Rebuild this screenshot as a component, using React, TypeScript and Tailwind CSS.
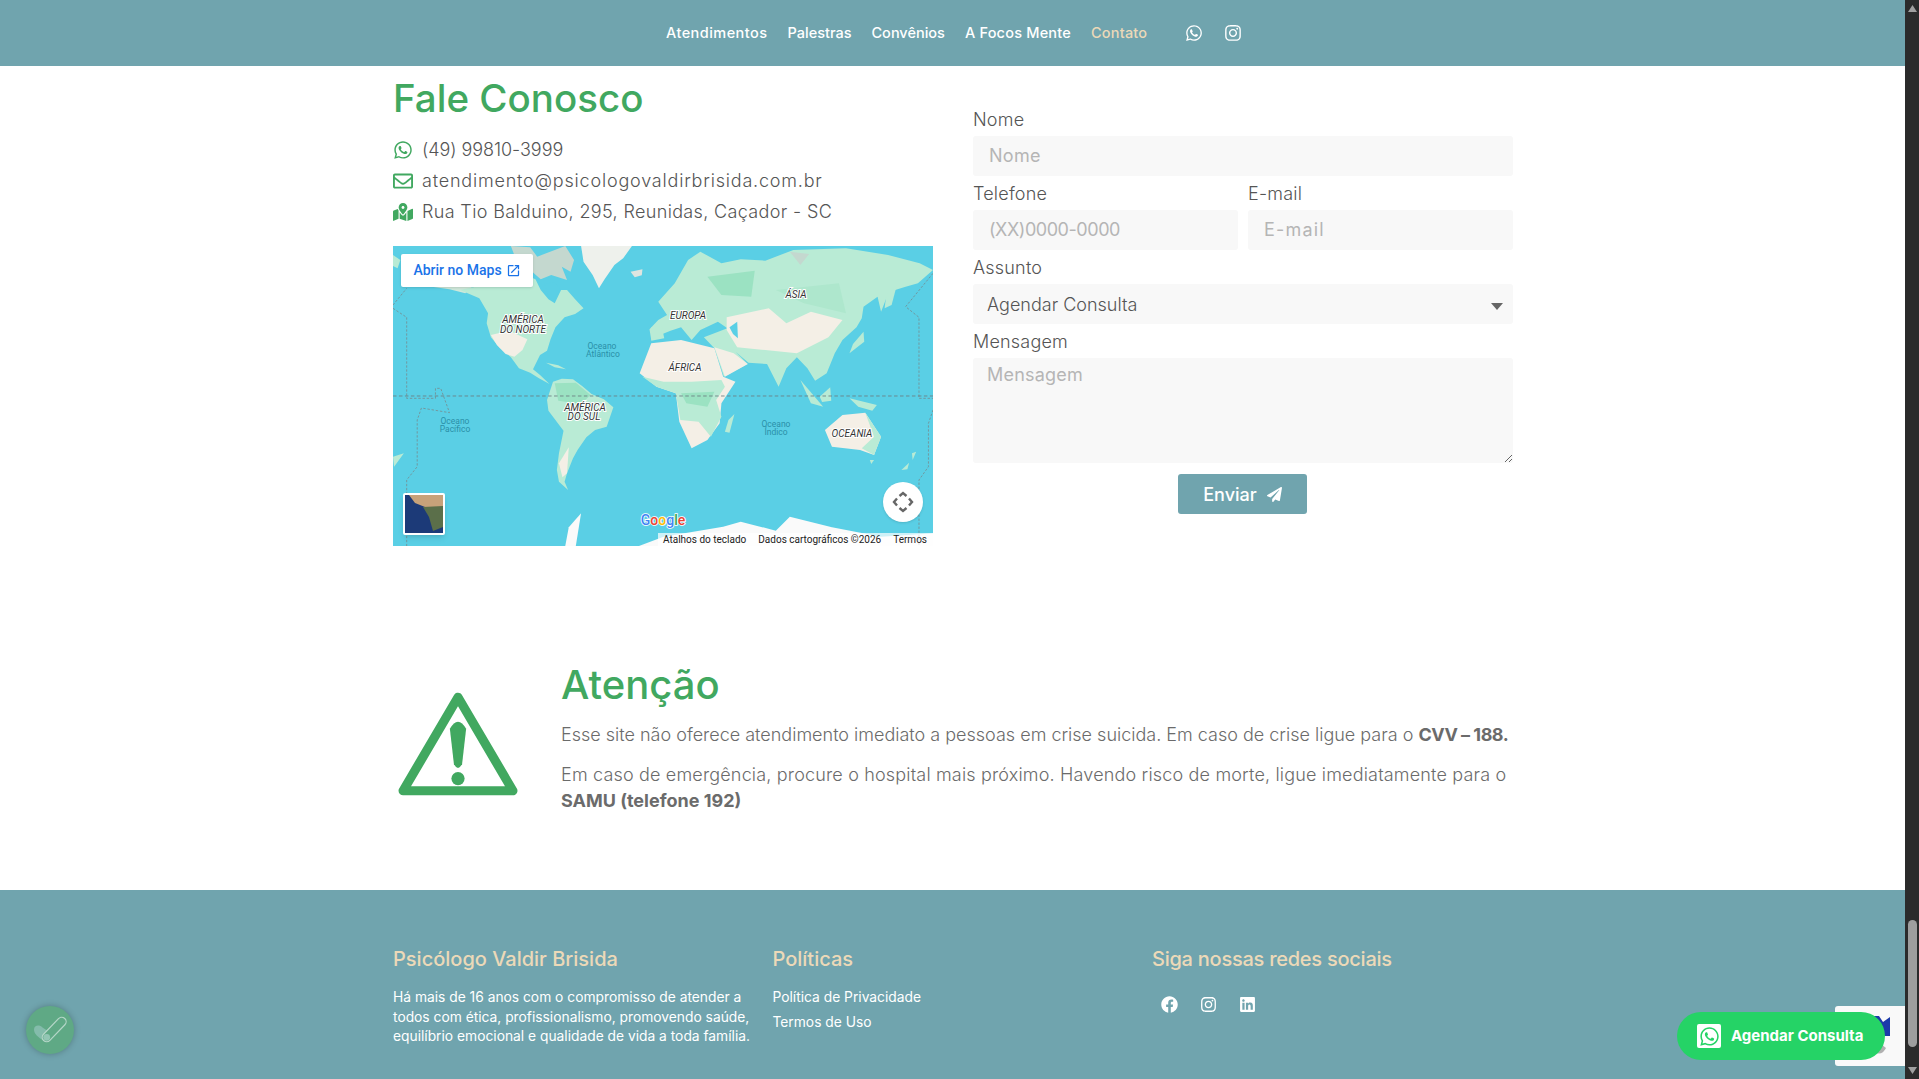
import React from "react";
import { FaWhatsapp, FaInstagram, FaRegEnvelope, FaMapMarkedAlt, FaPaperPlane, FaFacebook, FaLinkedin } from "react-icons/fa";
import { MdOpenInNew } from "react-icons/md";

const LAND = "#b9ebd5";
const FOREST = "#9be2c2";
const SAND = "#f4efe6";
const SEA = "#5acfe5";

function WorldMap() {
  const label = { fontFamily: "Roboto, sans-serif", fontSize: 10, fontStyle: "italic", fill: "#333", stroke: "#fff", strokeWidth: 2, paintOrder: "stroke" as const };
  const ocean = { fontFamily: "Roboto, sans-serif", fontSize: 8.5, fill: "#2a8fa8", textAnchor: "middle" as const };
  return (
    <svg viewBox="0 0 540 300" className="w-full h-full block">
      <rect width="540" height="300" fill={SEA} />
      <g transform="scale(0.35088,0.33333) translate(-9,-18)">
        {/* arctic islands & greenland */}
        <path d="M345,18 L400,22 L420,50 L470,30 L500,18 L525,60 L515,95 L490,80 L505,120 L460,105 L430,118 L400,90 L360,60Z" fill="#c4d8cf" />
        <path d="M120,140 L190,118 L235,140 L215,160 L170,148Z" fill="#cfe8da" />
        <path d="M545,18 L690,18 L665,55 L640,75 L612,118 L596,145 L578,105 L552,65Z" fill="#eef1ec" />
        <path d="M686,95 L720,88 L718,106 L698,112Z" fill="#dfe5e0" />
        <path d="M9,45 L30,60 L22,85 L9,78Z" fill={LAND} />
        {/* north america */}
        <path d="M200,150 L235,142 L300,135 L345,118 L375,100 L415,118 L430,150 L452,178 L470,190 L488,150 L505,150 L528,178 L552,205 L528,222 L498,232 L472,262 L458,298 L448,332 L428,345 L408,388 L428,405 L455,432 L425,415 L400,398 L368,385 L345,352 L312,322 L288,292 L276,250 L280,220 L255,175Z" fill={LAND} />
        <path d="M288,285 L340,272 L392,298 L378,330 L355,350 L330,342 L305,315Z" fill={SAND} />
        <path d="M440,130 L470,128 L486,146 L468,182 L452,168Z" fill={SEA} />
        <path d="M445,368 L480,376 L502,388 L470,382Z" fill={LAND} />
        {/* south america */}
        <path d="M465,425 L490,416 L522,418 L548,438 L575,462 L610,478 L637,502 L618,560 L585,570 L560,592 L535,630 L522,655 L505,700 L498,725 L508,750 L482,725 L476,690 L482,640 L495,572 L452,512 L448,480Z" fill={LAND} />
        <path d="M470,430 L530,428 L572,465 L545,492 L480,482Z" fill={FOREST} />
        <path d="M482,670 L510,622 L505,700 L492,712Z" fill={SAND} />
        {/* eurasia */}
        <path d="M745,300 L740,268 L765,240 L790,225 L765,185 L812,130 L850,60 L885,35 L945,70 L1000,58 L1070,62 L1150,30 L1300,25 L1420,45 L1510,70 L1548,90 L1505,130 L1470,140 L1440,150 L1415,175 L1400,215 L1390,170 L1350,200 L1345,235 L1330,262 L1290,300 L1268,340 L1245,400 L1212,422 L1190,385 L1160,352 L1130,385 L1108,440 L1075,372 L1022,368 L985,335 L1020,372 L952,410 L925,325 L895,292 L962,265 L935,245 L885,270 L860,300 L830,262 L800,272 L770,285Z" fill={LAND} />
        <path d="M905,110 L1040,92 L1030,170 L945,165Z" fill={FOREST} />
        <path d="M1100,150 L1280,130 L1300,220 L1180,190Z" fill="#aee7cd" />
        <path d="M960,232 L1080,205 L1130,250 L1200,215 L1290,240 L1250,292 L1160,340 L1070,330 L990,322 L960,270Z" fill={SAND} />
        <path d="M925,322 L980,340 L1020,372 L955,410Z" fill={SAND} />
        <path d="M968,262 L990,245 L992,295 L978,282Z" fill={SEA} />
        <path d="M1140,35 L1195,42 L1170,75Z" fill="#c4d8cf" />
        <path d="M1415,165 L1445,135 L1430,195 L1410,205Z" fill={LAND} />
        <path d="M745,262 L775,258 L782,295 L745,302Z" fill={LAND} />
        {/* japan, indonesia etc. */}
        <path d="M1350,275 L1352,305 L1310,340 L1320,312Z" fill={LAND} />
        <path d="M1170,420 L1235,500 L1200,490Z" fill={LAND} />
        <path d="M1225,470 L1255,442 L1258,482 L1232,486Z" fill={LAND} />
        <path d="M1310,475 L1388,495 L1375,512 L1335,500Z" fill={LAND} />
        {/* africa */}
        <path d="M745,310 L830,300 L925,325 L950,410 L985,425 L945,490 L940,550 L905,600 L860,625 L825,545 L815,460 L760,440 L712,400Z" fill={SAND} />
        <path d="M720,410 L780,425 L860,425 L945,420 L955,440 L930,480 L945,530 L915,590 L880,545 L828,540 L815,460 L760,440Z" fill={LAND} />
        <path d="M830,460 L925,455 L905,500 L845,490Z" fill={FOREST} />
        <path d="M965,540 L982,522 L968,578 L955,575Z" fill={LAND} />
        {/* australia */}
        <path d="M1240,570 L1290,525 L1355,518 L1400,590 L1380,645 L1340,630 L1260,620Z" fill={SAND} />
        <path d="M1355,518 L1400,590 L1380,645 L1345,625 L1380,590Z" fill={LAND} />
        <path d="M1368,660 L1380,660 L1372,672Z M1458,690 L1480,668 L1475,688Z M1488,640 L1500,635 L1490,660Z M9,650 L40,640 L12,680Z" fill={LAND} />
        {/* antarctica */}
        <path d="M710,918 L780,890 L950,860 L1000,845 L1100,872 L1140,830 L1260,862 L1400,890 L1548,880 L1548,918Z" fill="#fafafa" />
        <path d="M500,918 L510,862 L545,820 L530,918Z" fill="#fafafa" />
        {/* date lines */}
        <path d="M9,468 L1548,468" fill="none" stroke="#6c7b80" strokeWidth="2.5" strokeDasharray="10 7" />
        <g fill="none" stroke="#7b7f80" strokeWidth="2" strokeDasharray="7 5">
          <path d="M48,232 L48,475 L130,475 L130,445 L145,445 L170,518 L90,504 L78,540 L78,680 L48,720 L48,918" />
          <path d="M9,205 L48,232 M9,195 L48,145" />
          <path d="M1548,100 L1470,200 L1508,232 L1508,475 L1548,475" />
          <path d="M1548,510 L1535,550 L1535,680 L1508,720 L1508,918" />
        </g>
      </g>
      <g style={label}>
        <text x="130" y="77" textAnchor="middle">AMÉRICA</text>
        <text x="130" y="87" textAnchor="middle">DO NORTE</text>
        <text x="192" y="165" textAnchor="middle">AMÉRICA</text>
        <text x="191" y="174" textAnchor="middle">DO SUL</text>
        <text x="295" y="73" textAnchor="middle">EUROPA</text>
        <text x="292" y="125" textAnchor="middle">ÁFRICA</text>
        <text x="403" y="52" textAnchor="middle">ÁSIA</text>
        <text x="459" y="191" textAnchor="middle">OCEANIA</text>
      </g>
      <g style={ocean}>
        <text x="209" y="103">Oceano</text>
        <text x="210" y="111">Atlântico</text>
        <text x="62" y="178">Oceano</text>
        <text x="62" y="186">Pacífico</text>
        <text x="383" y="181">Oceano</text>
        <text x="383" y="189">Índico</text>
      </g>
      <text x="270" y="279" textAnchor="middle" style={{ fontFamily: "Roboto, sans-serif", fontSize: 14, fontWeight: 500, stroke: "#fff", strokeWidth: 1.6, paintOrder: "stroke" }}>
        <tspan fill="#4285f4">G</tspan><tspan fill="#ea4335">o</tspan><tspan fill="#fbbc05">o</tspan><tspan fill="#4285f4">g</tspan><tspan fill="#34a853">l</tspan><tspan fill="#ea4335">e</tspan>
      </text>
    </svg>
  );
}

const labelCls = "h-[20px] leading-[20px] text-[18px] font-light text-[#555] tracking-[0.2px]";

function Field({ label, placeholder, inputClass }: { label: string; placeholder: string; inputClass: string }) {
  return (
    <div className="flex-1 min-w-0">
      <div className={labelCls}>{label}</div>
      <input placeholder={placeholder} className={inputClass} />
    </div>
  );
}

function Contact({ icon, text, track }: { icon: React.ReactNode; text: string; track: string }) {
  return (
    <div className="flex items-center h-[31px]">
      <div className="w-[29px] flex justify-start text-[#41a860]">{icon}</div>
      <div className={track}>{text}</div>
    </div>
  );
}

export default function App() {
  return (
    <div className="relative flex h-[1079px] w-full overflow-hidden bg-white font-['Inter',sans-serif]">
      <div className="flex-1 min-w-0 flex flex-col">
        <header className="h-[66px] bg-[#70a4ae] flex items-center pl-[666px] text-[14.5px] font-medium text-white">
          <a className="tracking-[0.45px]">Atendimentos</a>
          <a className="ml-[20px]">Palestras</a>
          <a className="ml-[20px]">Convênios</a>
          <a className="ml-[20px] tracking-[0.2px]">A Focos Mente</a>
          <a className="ml-[20px] tracking-[0.2px] text-[#ecd9b8]">Contato</a>
          <FaWhatsapp className="ml-[38px] text-[18px]" />
          <FaInstagram className="ml-[21px] text-[18px]" />
        </header>

        <main className="flex-1 pl-[393px] pr-[392px]">
          <div className="grid grid-cols-2 gap-[40px] pt-[10px]">
            <section>
              <h1 className="h-[45px] leading-[45px] text-[38.5px] font-medium text-[#41a860]">Fale Conosco</h1>
              <div className="mt-[13px]">
                <Contact icon={<FaWhatsapp className="text-[20px]" />} text="(49) 99810-3999" track="text-[18px] text-[#555] font-light tracking-[-0.05px]" />
                <Contact icon={<FaRegEnvelope className="text-[20px]" />} text="atendimento@psicologovaldirbrisida.com.br" track="text-[18px] text-[#555] font-light tracking-[0.8px]" />
                <Contact icon={<FaMapMarkedAlt className="text-[20px]" />} text="Rua Tio Balduino, 295, Reunidas, Caçador - SC" track="text-[18px] text-[#555] font-light tracking-[0.35px]" />
              </div>
              <div className="relative mt-[19px] h-[300px] overflow-hidden">
                <WorldMap />
                <div className="absolute left-[8px] top-[8px] flex h-[33px] w-[132px] items-center justify-center gap-[4px] rounded-[2px] bg-white shadow-sm font-['Roboto',sans-serif] text-[14px] font-medium text-[#1a73e8]">
                  Abrir no Maps <MdOpenInNew className="text-[15px]" />
                </div>
                <div className="absolute left-[10px] top-[247px] h-[42px] w-[42px] rounded-[2px] border-2 border-white shadow-md bg-[#1c3a78] overflow-hidden">
                  <svg viewBox="0 0 38 38" className="w-full h-full block">
                    <rect width="38" height="38" fill="#1c3a78" />
                    <path d="M4,0 L38,0 L38,12 L20,12 L10,8Z" fill="#c7a27a" />
                    <path d="M18,12 L38,11 L38,32 L28,36 L24,22Z" fill="#5b6f4a" />
                  </svg>
                </div>
                <div className="absolute left-[490px] top-[236px] flex h-[40px] w-[40px] items-center justify-center rounded-full bg-white shadow">
                  <svg viewBox="0 0 24 24" className="w-[24px] h-[24px]" fill="none" stroke="#666" strokeWidth="2.4">
                    <path d="M8.5 6 L12 3 L15.5 6 M8.5 18 L12 21 L15.5 18 M6 8.5 L3 12 L6 15.5 M18 8.5 L21 12 L18 15.5" />
                  </svg>
                </div>
                <div className="absolute right-0 bottom-0 flex h-[13px] items-center bg-white/70 font-['Roboto',sans-serif] text-[10px] text-[#222]">
                  <span className="pl-[5px] pr-[6px]">Atalhos do teclado</span>
                  <span className="px-[6px]">Dados cartográficos ©2026</span>
                  <span className="pl-[6px] pr-[6px]">Termos</span>
                </div>
              </div>
            </section>

            <section className="pt-[34px]">
              <div className="flex flex-col gap-[8px]">
                <Field label="Nome" placeholder="Nome" inputClass="mt-[6px] block w-full h-[40px] rounded-[3px] bg-[#f8f8f8] pl-[16px] pb-[2px] text-[18px] text-[#666] tracking-[0.3px] outline-none placeholder:text-[#b5b5b5]" />
                <div className="flex gap-[10px]">
                  <Field label="Telefone" placeholder="(XX)0000-0000" inputClass="mt-[6px] block w-full h-[40px] rounded-[3px] bg-[#f8f8f8] pl-[16px] pb-[2px] text-[18px] text-[#666] tracking-[-0.45px] outline-none placeholder:text-[#b5b5b5]" />
                  <Field label="E-mail" placeholder="E-mail" inputClass="mt-[6px] block w-full h-[40px] rounded-[3px] bg-[#f8f8f8] pl-[16px] pb-[2px] text-[18px] text-[#666] tracking-[1.2px] outline-none placeholder:text-[#b5b5b5]" />
                </div>
                <div>
                  <div className={labelCls}>Assunto</div>
                  <div className="relative mt-[6px] flex h-[40px] items-center rounded-[3px] bg-[#f8f8f8] pl-[14px] text-[18px] font-light text-[#555]">
                    Agendar Consulta
                    <svg viewBox="0 0 12 7" className="absolute right-[10px] top-[19px] w-[12px] h-[7px]"><path d="M0,0 L12,0 L6,7Z" fill="#666" /></svg>
                  </div>
                </div>
                <div>
                  <div className={labelCls}>Mensagem</div>
                  <textarea placeholder="Mensagem" className="mt-[6px] block h-[105px] w-full rounded-[3px] bg-[#f8f8f8] pl-[14px] pt-[3px] text-[18px] text-[#666] tracking-[0.2px] outline-none placeholder:text-[#b5b5b5]" />
                </div>
              </div>
              <div className="mt-[11px] flex justify-center pr-[1px]">
                <button className="flex h-[40px] w-[129px] items-center justify-center gap-[10px] rounded-[3px] bg-[#70a4ae] text-[18px] font-medium text-white">
                  Enviar <FaPaperPlane className="text-[15px]" />
                </button>
              </div>
            </section>
          </div>

          <section className="mt-[116px] flex">
            <div className="w-[168px] pl-[4px] pt-[28px] shrink-0">
              <svg viewBox="0 0 120 106" className="w-[122px] h-[108px]">
                <path d="M60,7 L114,99 L6,99Z" fill="none" stroke="#41a860" strokeWidth="9" strokeLinejoin="round" />
                <path d="M52,38 Q60,24 68,38 L64,73 Q60,80 56,73Z" fill="#41a860" />
                <circle cx="60" cy="87" r="6.5" fill="#41a860" />
              </svg>
            </div>
            <div className="flex-1 min-w-0">
              <h2 className="h-[45px] leading-[45px] text-[40px] font-medium text-[#41a860]">Atenção</h2>
              <p className="mt-[15px] text-[18px] leading-[26px] text-[#6b6b6b] font-light">Esse site não oferece atendimento imediato a pessoas em crise suicida. Em caso de crise ligue para o <b className="font-bold tracking-[-0.5px] whitespace-nowrap">CVV – 188.</b></p>
              <p className="mt-[14px] text-[18px] leading-[26px] text-[#6b6b6b] font-light tracking-[0.17px]">Em caso de emergência, procure o hospital mais próximo. Havendo risco de morte, ligue imediatamente para o <b className="font-bold tracking-normal">SAMU (telefone 192)</b></p>
            </div>
          </section>
        </main>

        <footer className="h-[189px] bg-[#70a4ae] pl-[393px] pr-[392px] pt-[57px] grid grid-cols-[379.5px_379.5px_1fr]">
          <div>
            <h3 className="h-[24px] leading-[24px] text-[20px] font-medium text-[#ecd9b8]">Psicólogo Valdir Brisida</h3>
            <p className="mt-[17px] text-[13.8px] leading-[19.5px] text-white w-[370px]">Há mais de 16 anos com o compromisso de atender a todos com ética, profissionalismo, promovendo saúde, equilíbrio emocional e qualidade de vida a toda família.</p>
          </div>
          <div>
            <h3 className="h-[24px] leading-[24px] text-[20px] font-medium text-[#ecd9b8]">Políticas</h3>
            <div className="mt-[17px] text-[13.8px] leading-[19.5px] text-white">Política de Privacidade</div>
            <div className="mt-[5px] text-[13.8px] leading-[19.5px] text-white">Termos de Uso</div>
          </div>
          <div>
            <h3 className="h-[24px] leading-[24px] text-[20px] font-medium tracking-[-0.25px] text-[#ecd9b8]">Siga nossas redes sociais</h3>
            <div className="mt-[25px] flex pl-[9px] gap-[22px] text-white text-[17px]">
              <FaFacebook /><FaInstagram /><FaLinkedin />
            </div>
          </div>
        </footer>
      </div>

      <div className="relative flex w-[14px] shrink-0 flex-col items-center justify-between bg-[#2b2b2b]">
        <svg viewBox="0 0 9 7" className="mt-[5px] w-[9px] h-[7px]"><path d="M4.5,0 L9,7 L0,7Z" fill="#a0a0a0" /></svg>
        <div className="absolute left-[3px] top-[920px] h-[127px] w-[9px] rounded-full bg-[#9e9e9e]" />
        <svg viewBox="0 0 9 7" className="mb-[5px] w-[9px] h-[7px]"><path d="M4.5,7 L9,0 L0,0Z" fill="#a0a0a0" /></svg>
      </div>

      <div className="absolute left-[26px] top-[1006px] h-[48px] w-[48px] rounded-full bg-[#5fa985] shadow-[0_0_6px_rgba(0,0,0,0.25)]">
        <svg viewBox="6 6 48 48" className="w-[48px] h-[48px] block">
          <path d="M24,41 C18,37 14,34 14,29.5 C14,25.5 19,24 22.5,27.5 L31,33 L27,40Z" fill="#84bcab" />
          <path d="M26.7,37.3 L41.7,21.7" fill="none" stroke="#b5d6c8" strokeWidth="10" strokeLinecap="round" />
          <path d="M26.7,37.3 L41.7,21.7" fill="none" stroke="#5fa985" strokeWidth="7.6" strokeLinecap="round" />
          <circle cx="26.7" cy="37.3" r="3.4" fill="#93c6b4" />
        </svg>
      </div>

      <div className="absolute left-[1835px] top-[1006px] h-[60px] w-[70px] rounded-l-[3px] bg-[#f9f9f9]">
        <svg viewBox="0 0 70 60" className="w-full h-full block">
          <path d="M34,10 L44,10 L48,16 L55,11 L55,30 L34,30Z" fill="#1c3aa9" />
          <path d="M36,44 Q46,52 51,42 L46,38Z" fill="#b0b0b0" />
        </svg>
      </div>

      <div className="absolute left-[1677px] top-[1012px] flex h-[48px] w-[208px] items-center rounded-[24px] bg-[#25d366] pl-[20px] text-[15px] font-bold text-white">
        <span className="flex h-[24px] w-[24px] items-center justify-center rounded-[2px] bg-white text-[#25d366] text-[21px]"><FaWhatsapp /></span>
        <span className="ml-[10px]">Agendar Consulta</span>
      </div>
    </div>
  );
}
